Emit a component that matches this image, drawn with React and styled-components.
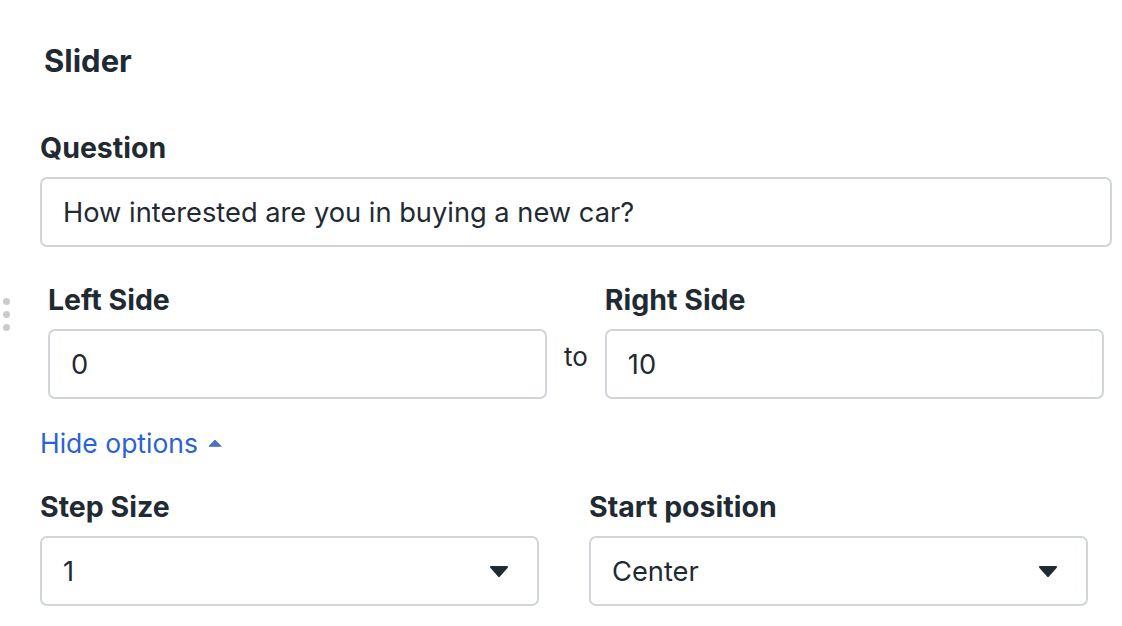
import React from 'react';
import styled, { createGlobalStyle } from 'styled-components';

const colors = {
  text: '#1f2a33',
  border: '#cfd5db',
  link: '#2b61d6',
  caretUp: '#4c6fc4',
  handle: '#c9cbcd',
};

const GlobalStyle = createGlobalStyle`
  html, body {
    margin: 0;
    padding: 0;
    background: #fff;
  }
  body {
    font-family: Inter, "Liberation Sans", Arial, sans-serif;
    color: ${colors.text};
  }
`;

const StyledPanel = styled.div`
  width: 1122px;
  padding: 43px 0 0 40px;
  box-sizing: border-box;
`;
const StyledTitle = styled.h2`
  margin: 0 0 53px 4px;
  font-size: 31px;
  line-height: 36px;
  font-weight: 700;
`;
const StyledField = styled.div`
  display: flex;
  flex-direction: column;
  width: ${props => props.width || 'auto'};
`;
const StyledLabel = styled.label`
  display: block;
  margin: 0 0 13px;
  font-size: 28.5px;
  line-height: 32px;
  font-weight: 700;
`;
const StyledInput = styled.div`
  box-sizing: border-box;
  height: 70px;
  width: ${props => props.width || '100%'};
  display: flex;
  align-items: center;
  justify-content: space-between;
  padding: 0 28px 0 21px;
  border: 2px solid ${colors.border};
  border-radius: 7px;
  font-size: 27.25px;
  background: #fff;
`;
const StyledRange = styled.div`
  position: relative;
  display: flex;
  align-items: flex-start;
  margin: 37px 0 0;
  padding-left: 8px;
  width: 1064px;
`;
const StyledHandle = styled.div`
  position: absolute;
  left: -37px;
  top: 14px;
  display: flex;
  flex-direction: column;
  gap: 6px;
  span {
    width: 7px;
    height: 7px;
    border-radius: 50%;
    background: ${colors.handle};
  }
`;
const StyledTo = styled.span`
  margin: 57px 17px 0;
  font-size: 26px;
  line-height: 32px;
`;
const StyledToggle = styled.button`
  display: flex;
  align-items: center;
  gap: 10px;
  margin: 28px 0 0;
  padding: 0;
  border: 0;
  background: none;
  font-family: inherit;
  font-size: 26.5px;
  line-height: 32px;
  color: ${colors.link};
  cursor: pointer;
`;
const StyledOptions = styled.div`
  display: grid;
  grid-template-columns: 499px 499px;
  column-gap: 50px;
  margin-top: 32px;
`;

const Caret = ({ up, color }) => (
  <svg width="20" height="11" viewBox="0 0 20 11" style={up ? { width: 14, height: 8 } : undefined}>
    <path
      d={up ? 'M2 10 L10 2 L18 10 Z' : 'M2 1 L18 1 L10 10 Z'}
      fill={color}
      stroke={color}
      strokeWidth="2"
      strokeLinejoin="round"
    />
  </svg>
);

const App = () => (
  <>
    <GlobalStyle />
    <StyledPanel>
      <StyledTitle>Slider</StyledTitle>

      <StyledField>
        <StyledLabel>Question</StyledLabel>
        <StyledInput width="1072px">How interested are you in buying a new car?</StyledInput>
      </StyledField>

      <StyledRange>
        <StyledHandle>
          <span />
          <span />
          <span />
        </StyledHandle>
        <StyledField width="499px">
          <StyledLabel>Left Side</StyledLabel>
          <StyledInput>0</StyledInput>
        </StyledField>
        <StyledTo>to</StyledTo>
        <StyledField width="499px">
          <StyledLabel>Right Side</StyledLabel>
          <StyledInput>10</StyledInput>
        </StyledField>
      </StyledRange>

      <StyledToggle>
        Hide options
        <Caret up color={colors.caretUp} />
      </StyledToggle>

      <StyledOptions>
        <StyledField>
          <StyledLabel>Step Size</StyledLabel>
          <StyledInput>
            1
            <Caret color={colors.text} />
          </StyledInput>
        </StyledField>
        <StyledField>
          <StyledLabel>Start position</StyledLabel>
          <StyledInput>
            Center
            <Caret color={colors.text} />
          </StyledInput>
        </StyledField>
      </StyledOptions>
    </StyledPanel>
  </>
);

export default App;
